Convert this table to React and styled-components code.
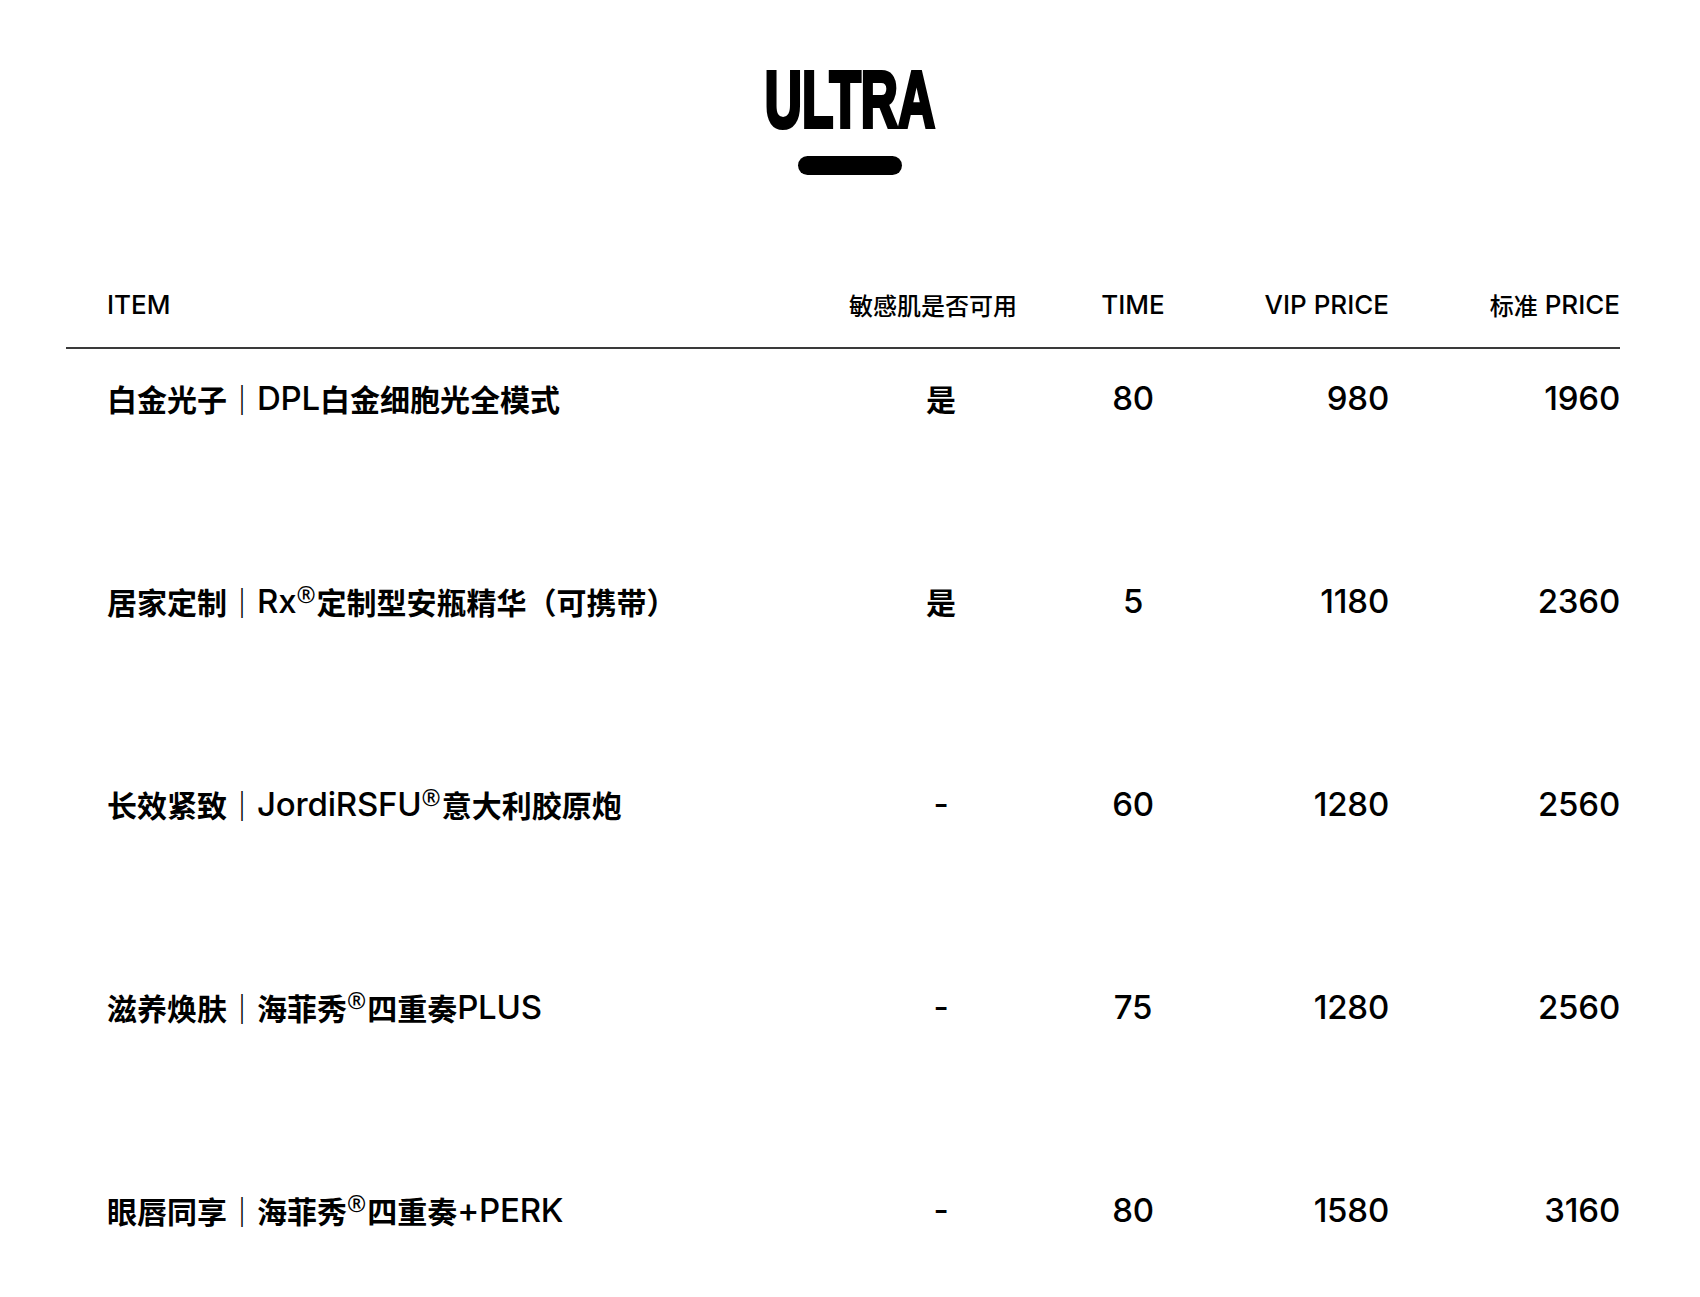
import React from "react";
import styled, { createGlobalStyle } from "styled-components";

const GlobalStyle = createGlobalStyle`
  body {
    margin: 0;
    background: #fff;
    color: #000;
    font-family: Inter, "Noto Sans CJK SC", sans-serif;
  }
`;

const COLS = "774px 202px 182px 165px 231px";

const Page = styled.div`
  width: 1700px;
  min-height: 1297px;
  box-sizing: border-box;
  padding-top: 60px;
  display: flex;
  flex-direction: column;
  align-items: center;
`;

const Title = styled.h1`
  margin: 0;
  height: 79px;
  font-family: "Liberation Sans", Arial, sans-serif;
  font-weight: 700;
  font-size: 79px;
  line-height: 79px;
  transform: scaleX(0.65);
  -webkit-text-stroke: 4px #000;
`;

const Bar = styled.div`
  margin-top: 17px;
  width: 104px;
  height: 19px;
  border-radius: 10px;
  background: #000;
`;

const Table = styled.div`
  align-self: flex-start;
  margin: 110px 0 0 66px;
  width: 1554px;
`;

const HeadRow = styled.div`
  display: grid;
  grid-template-columns: ${COLS};
  padding-bottom: 22px;
  border-bottom: 2px solid #3a3a3a;
`;

const Row = styled.div`
  display: grid;
  grid-template-columns: ${COLS};
  height: 203px;
  box-sizing: border-box;
  padding-top: 29px;
  align-items: start;

  &:last-child {
    height: auto;
  }
`;

const Cell = styled.div`
  height: 40px;
  display: flex;
  align-items: center;
  justify-content: ${(p) =>
    p.$align === "center" ? "center" : p.$align === "right" ? "flex-end" : "flex-start"};
  padding-left: ${(p) => (p.$first ? "41px" : "0")};
  padding-right: ${(p) => p.$shift || "0"};
  white-space: pre;
  line-height: 40px;
  font-size: ${(p) => (p.$head ? "24px" : "30px")};
  font-weight: ${(p) => (p.$head ? 500 : 600)};
  font-family: "Noto Sans CJK SC", sans-serif;
`;

const Latin = styled.span`
  font-family: Inter, "Noto Sans", sans-serif;
  font-size: ${(p) => (p.$head ? "26px" : "33px")};
  font-weight: 500;
  letter-spacing: ${(p) => (p.$head ? "0" : "-0.2px")};
`;

const Sup = styled.span`
  display: inline-block;
  font-family: "Noto Sans", sans-serif;
  font-size: 23px;
  font-weight: 400;
  line-height: 1;
  margin: 0 1px 0 0;
  transform: translateY(-7px);
`;

const Mixed = ({ text, head }) => {
  const parts = text.split(/([A-Za-z0-9+\- ]+|®)/).filter(Boolean);
  return parts.map((s, i) => {
    if (s === "®") return <Sup key={i}>®</Sup>;
    if (/^[A-Za-z0-9+\- ]+$/.test(s))
      return (
        <Latin key={i} $head={head}>
          {s}
        </Latin>
      );
    return <React.Fragment key={i}>{s}</React.Fragment>;
  });
};

const headers = [
  { text: "ITEM", align: "left" },
  { text: "敏感肌是否可用", align: "center", shift: "16px" },
  { text: "TIME", align: "center" },
  { text: "VIP PRICE", align: "right" },
  { text: "标准 PRICE", align: "right" },
];

const rows = [
  ["白金光子｜DPL白金细胞光全模式", "是", "80", "980", "1960"],
  ["居家定制｜Rx®定制型安瓶精华（可携带）", "是", "5", "1180", "2360"],
  ["长效紧致｜JordiRSFU®意大利胶原炮", "-", "60", "1280", "2560"],
  ["滋养焕肤｜海菲秀®四重奏PLUS", "-", "75", "1280", "2560"],
  ["眼唇同享｜海菲秀®四重奏+PERK", "-", "80", "1580", "3160"],
];

const aligns = ["left", "center", "center", "right", "right"];

export default function App() {
  return (
    <>
      <GlobalStyle />
      <Page>
        <Title>ULTRA</Title>
        <Bar />
        <Table>
          <HeadRow>
            {headers.map((h, i) => (
              <Cell key={i} $head $align={h.align} $first={i === 0} $shift={h.shift}>
                <Mixed text={h.text} head />
              </Cell>
            ))}
          </HeadRow>
          {rows.map((r, ri) => (
            <Row key={ri}>
              {r.map((v, ci) => (
                <Cell key={ci} $align={aligns[ci]} $first={ci === 0}>
                  <Mixed text={v} />
                </Cell>
              ))}
            </Row>
          ))}
        </Table>
      </Page>
    </>
  );
}
